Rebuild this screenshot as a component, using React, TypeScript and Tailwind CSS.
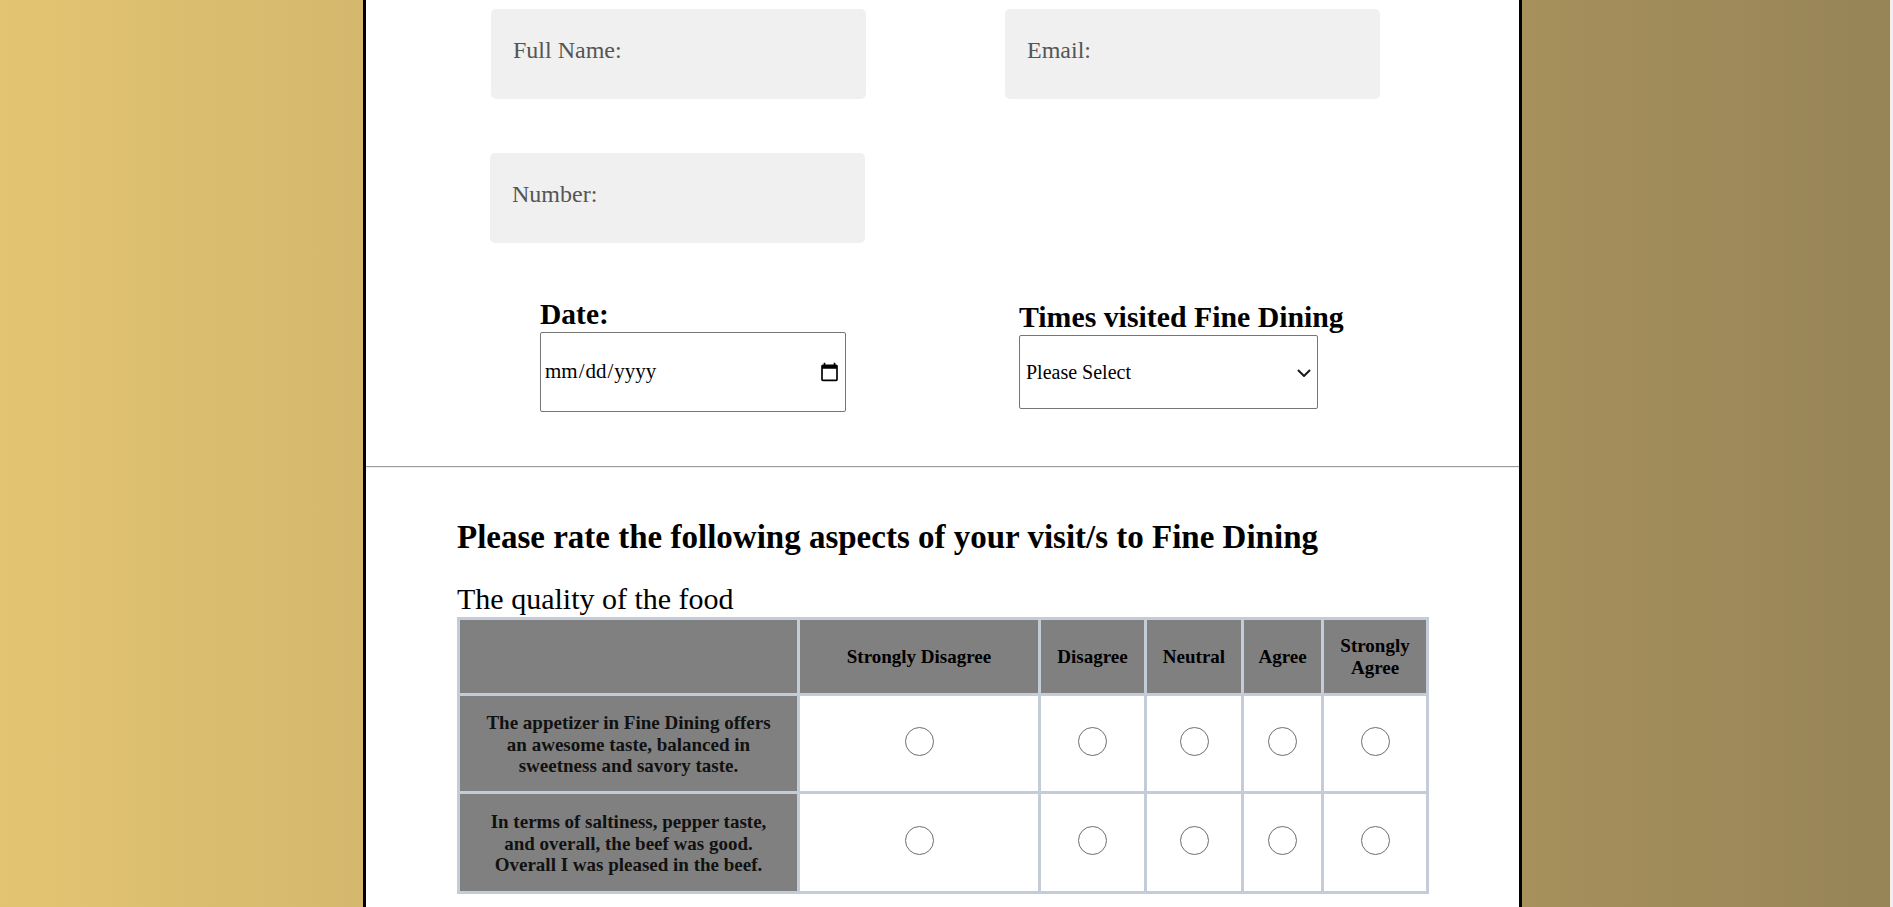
import { useState } from "react";

// Survey form — gold page, white card, contact fields + rating grid

const serif = "font-['Liberation_Serif','Times_New_Roman',serif]";

const choices = ["Strongly Disagree", "Disagree", "Neutral", "Agree", "Strongly Agree"];

const statements = [
  "The appetizer in Fine Dining offers an awesome taste, balanced in sweetness and savory taste.",
  "In terms of saltiness, pepper taste, and overall, the beef was good. Overall I was pleased in the beef.",
];

function Field({ placeholder, type = "text" }: { placeholder: string; type?: string }) {
  return (
    <input
      type={type}
      placeholder={placeholder}
      className={`${serif} h-[90px] w-[375px] rounded-[5px] bg-[#f0f0f0] pb-[8px] pl-[22px] text-[24px] text-black outline-none placeholder:text-[#555]`}
    />
  );
}

function Radio({ name, value, checked, onPick }: { name: string; value: string; checked: boolean; onPick: () => void }) {
  return (
    <input
      type="radio"
      name={name}
      value={value}
      checked={checked}
      onChange={onPick}
      className="h-[29px] w-[29px] cursor-pointer appearance-none rounded-full border-[1.5px] border-[#6e6e6e] bg-white checked:border-[8px] checked:border-[#0075ff]"
    />
  );
}

export default function App() {
  const [answers, setAnswers] = useState<Record<number, string>>({});

  return (
    <div className={`${serif} flex min-h-screen w-[1893px]`}>
      <div className="w-[1890px] bg-[linear-gradient(to_right,#e3c472,#978457)]">
        <div className="ml-[363px] min-h-screen w-[1159px] border-x-[3px] border-black bg-white pb-[80px] pt-[9px]">
          {/* contact fields */}
          <div className="flex gap-[139px] pl-[125px]">
            <Field placeholder="Full Name:" />
            <Field placeholder="Email:" type="email" />
          </div>
          <div className="mt-[54px] flex pl-[124px]">
            <Field placeholder="Number:" type="tel" />
          </div>

          {/* date + visits */}
          <div className="mt-[55px] flex items-start gap-[173px] pl-[174px]">
            <div className="flex flex-col">
              <label className="text-[29.5px] font-bold leading-[33px] text-black">Date:</label>
              <input
                type="date"
                className={`${serif} mt-[1px] h-[80px] w-[306px] rounded-[2px] border border-[#767676] px-[3px] text-[21px] text-black`}
              />
            </div>
            <div className="flex flex-col pt-[2px]">
              <label className="text-[29.8px] font-bold leading-[33px] text-black">Times visited Fine Dining</label>
              <div className="relative mt-[2px] w-[299px]">
                <select
                  defaultValue=""
                  className={`${serif} h-[74px] w-full appearance-none rounded-[2px] border border-[#767676] bg-white pl-[6px] text-[20px] text-black outline-none`}
                >
                  <option value="">Please Select</option>
                  <option>First time</option>
                  <option>2 - 5 times</option>
                  <option>More than 5 times</option>
                </select>
                <svg
                  viewBox="0 0 14 8"
                  className="pointer-events-none absolute right-[7px] top-[34px] h-[8px] w-[14px]"
                  fill="none"
                  stroke="#1a1a1a"
                  strokeWidth="2"
                >
                  <path d="M1 1l6 6 6-6" />
                </svg>
              </div>
            </div>
          </div>

          <hr className="mt-[54px] border-0 border-b border-t border-b-[#eeeeee] border-t-[#9c9c9c]" />

          {/* rating section */}
          <div className="pl-[91px]">
            <h2 className="mt-[51px] text-[33px] font-bold leading-[37px] text-black">
              Please rate the following aspects of your visit/s to Fine Dining
            </h2>
            <p className="mt-[26px] text-[30px] leading-[33px] text-black">The quality of the food</p>

            <div className="mt-[2px] grid w-[972px] grid-cols-[337px_238px_103px_94px_77px_102px] grid-rows-[73px_95px_97px] gap-[3px] bg-[#c5ccd9] p-[3px]">
              <div className="bg-[#808080]" />
              {choices.map((c) => (
                <div
                  key={c}
                  className="flex items-center justify-center bg-[#808080] px-[6px] text-center text-[19px] font-bold leading-[21.5px] text-black"
                >
                  {c}
                </div>
              ))}

              {statements.map((s, i) => (
                <div key={s} className="contents">
                  <div className="flex items-center justify-center bg-[#808080] px-[18px] pt-[2px] text-center text-[19px] font-bold leading-[21.8px] text-[#111]">
                    {s}
                  </div>
                  {choices.map((c) => (
                    <div key={c} className="flex items-center justify-center bg-white pb-[4px]">
                      <Radio
                        name={`q${i}`}
                        value={c}
                        checked={answers[i] === c}
                        onPick={() => setAnswers((a) => ({ ...a, [i]: c }))}
                      />
                    </div>
                  ))}
                </div>
              ))}
            </div>
          </div>
        </div>
      </div>
      <div className="w-[3px] bg-[#f0f0f0]" />
    </div>
  );
}
